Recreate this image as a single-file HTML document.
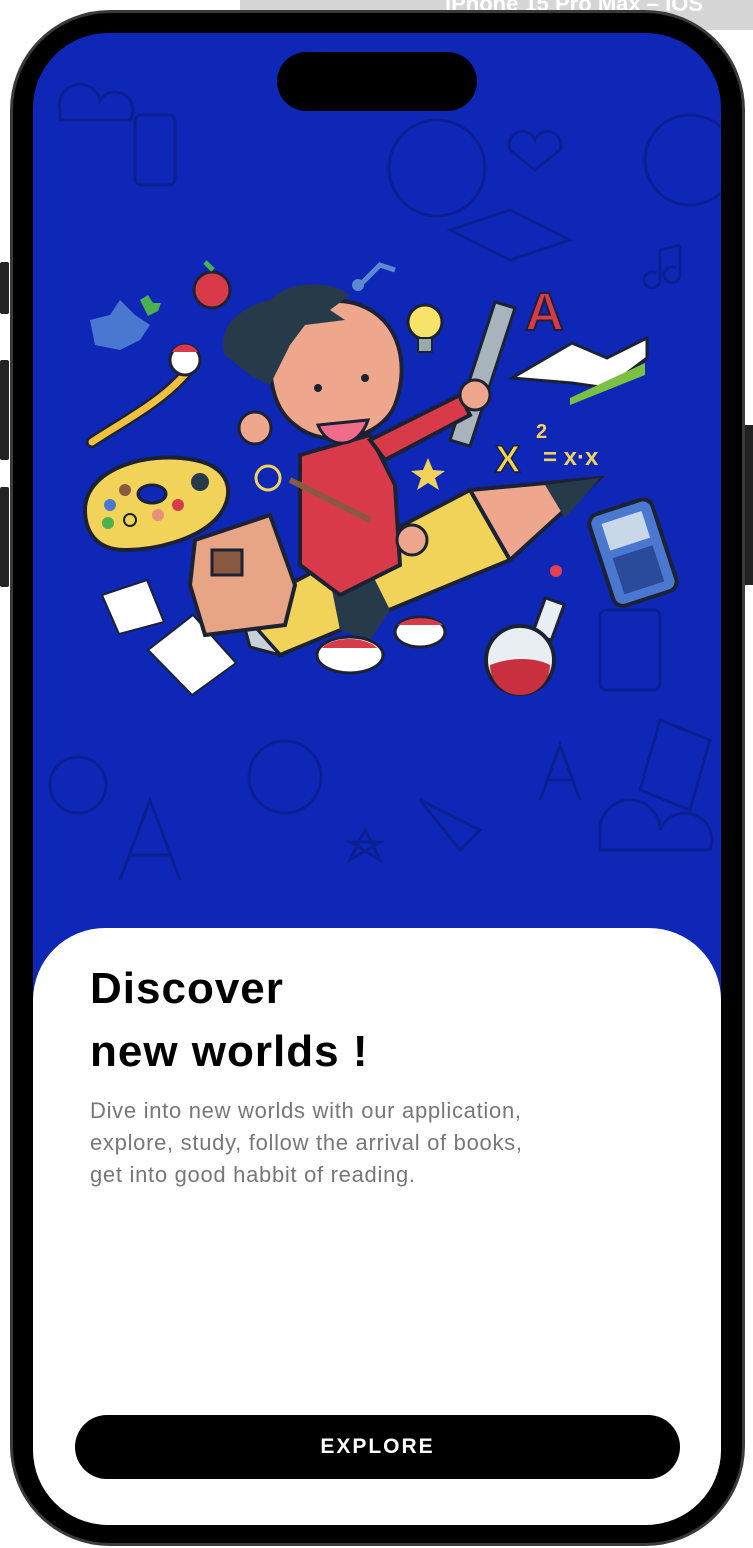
<!DOCTYPE html>
<html><head><meta charset="utf-8"><style>
*{margin:0;padding:0;box-sizing:border-box}
body{width:753px;height:1548px;background:#fff;position:relative;overflow:hidden;font-family:"Liberation Sans",sans-serif}
.bar{position:absolute;left:240px;top:0;width:513px;height:30px;background:#d6d6d6}
.bar span{position:absolute;left:205px;top:-9px;color:#fff;font-weight:bold;font-size:22px}
.btn{position:absolute;left:0;width:9px;background:#222;border-radius:2px}
.rbtn{position:absolute;left:745px;width:8px;background:#222}
.frame{position:absolute;left:10px;top:10px;width:735px;height:1536px;border-radius:100px;background:#000;border:3px solid #3a3a3a}
.screen{position:absolute;left:33px;top:33px;width:688px;height:1492px;border-radius:75px;background:#0e27b6;overflow:hidden}
.island{position:absolute;left:244px;top:19px;width:200px;height:59px;border-radius:30px;background:#000}
.card{position:absolute;left:0;top:895px;width:688px;height:620px;background:#fff;border-radius:72px 72px 0 0}
h1{position:absolute;left:57px;top:29px;font-size:44px;line-height:63px;font-weight:bold;color:#000;letter-spacing:1px}
p{position:absolute;left:57px;top:167px;font-size:22px;line-height:32px;color:#777;letter-spacing:0.7px}
.ex{position:absolute;left:42px;top:487px;width:605px;height:64px;border-radius:32px;background:#000;color:#fff;font-weight:bold;font-size:21px;letter-spacing:2px;text-align:center;line-height:64px}
</style></head><body>
<div class="bar"><span>iPhone 15 Pro Max – iOS</span></div>
<div class="btn" style="top:262px;height:52px"></div>
<div class="btn" style="top:360px;height:100px"></div>
<div class="btn" style="top:487px;height:100px"></div>
<div class="rbtn" style="top:425px;height:160px"></div>
<div class="frame"></div>
<div class="screen">
<svg width="688" height="900" viewBox="33 33 688 900" style="position:absolute;left:0;top:0">
<g fill="none" stroke="#0a1f8a" stroke-width="3" opacity="0.8">
<circle cx="437" cy="168" r="48"/><circle cx="285" cy="777" r="36"/>
<rect x="135" y="115" width="40" height="70" rx="6"/><path d="M510 150 l25 20 l25-20 a12 12 0 0 0-25-10 a12 12 0 0 0-25 10z"/>
<circle cx="690" cy="160" r="45"/><path d="M120 880 l30-80 l30 80 M130 855 h40"/>
<path d="M540 800 l20-55 l20 55 M548 780 h25"/><path d="M660 720 l50 20 l-20 70 l-50-20z"/>
<path d="M600 830 a30 30 0 0 1 60 0 a25 25 0 0 1 50 20 h-110z"/><path d="M350 860 l15-30 l15 30 l-30-18 h30z"/>
<path d="M420 800 l60 30 l-20 20z"/><circle cx="78" cy="785" r="28"/>
<path d="M60 110 a20 20 0 0 1 40-10 a18 18 0 0 1 30 20 h-70z"/><path d="M660 250 v30 a8 8 0 1 1-4-7 M680 245 v30 a8 8 0 1 1-4-7 M660 250 l20-5"/>
<path d="M450 230 l60-20 l60 30 l-60 20z"/><rect x="600" y="610" width="60" height="80" rx="6"/>
</g>
<path d="M85 510 c0-40 60-60 110-50 c40 8 40 40 20 60 c-20 20-60 30-90 30 c-30 0-40-20-40-40z" fill="#f2d35a" stroke="#1b2233" stroke-width="4"/>
<ellipse cx="152" cy="494" rx="14" ry="9" fill="#0e27b6" stroke="#1b2233" stroke-width="3"/>
<circle cx="200" cy="482" r="9" fill="#263a4a"/><circle cx="110" cy="505" r="6" fill="#4a78d0"/><circle cx="108" cy="523" r="6" fill="#4caf50"/><circle cx="130" cy="520" r="6" fill="#f2d35a" stroke="#1b2233" stroke-width="2"/><circle cx="158" cy="515" r="6" fill="#e8907a"/><circle cx="178" cy="505" r="6" fill="#d83a4a"/><circle cx="125" cy="490" r="6" fill="#8a5a40"/>
<path d="M92 442 c30-20 70-40 95-70" stroke="#1b2233" stroke-width="12" stroke-linecap="round" fill="none"/>
<path d="M92 442 c30-20 70-40 95-70" stroke="#f2c040" stroke-width="7" stroke-linecap="round" fill="none"/>
<circle cx="185" cy="360" r="15" fill="#fff" stroke="#1b2233" stroke-width="3"/><path d="M172 352 a15 15 0 0 1 26 0z" fill="#d83a4a"/>
<path d="M90 320 l20-5 l10-15 l15 15 l15 10 l-10 15 l-20 10 l-25-5z" fill="#4a78d0"/>
<path d="M140 300 l8-5 l5 8 l8 0 l-3 8 l-10 5z" fill="#4caf50"/>
<circle cx="212" cy="290" r="18" fill="#d83a4a" stroke="#1b2233" stroke-width="3"/><path d="M205 262 l8 8" stroke="#4caf50" stroke-width="5"/>
<path d="M360 285 l20-20 l15 5" stroke="#5a8ad0" stroke-width="5" fill="none"/><circle cx="358" cy="285" r="6" fill="#5a8ad0"/>
<circle cx="425" cy="322" r="17" fill="#f7e36a" stroke="#1b2233" stroke-width="3"/><rect x="418" y="338" width="14" height="14" fill="#9aa" stroke="#1b2233" stroke-width="2"/>
<path d="M450 440 l45-138 l20 6 l-45 138z" fill="#a8b4bc" stroke="#1b2233" stroke-width="3"/>
<text x="525" y="330" font-family="Liberation Sans" font-weight="bold" font-size="54" fill="#d83a4a" stroke="#1b2233" stroke-width="2">A</text>
<path d="M512 378 l60-35 l35 15 l40-20 v20 l-40 30 l-35-5z" fill="#fff" stroke="#1b2233" stroke-width="3"/><path d="M570 398 l75-35 v12 l-75 30z" fill="#7ac043"/>
<text x="495" y="472" font-family="Liberation Sans" font-weight="bold" font-size="38" fill="#f2d35a" stroke="#1b2233" stroke-width="1.5">X</text>
<text x="536" y="438" font-family="Liberation Sans" font-weight="bold" font-size="20" fill="#f2d35a">2</text>
<text x="543" y="465" font-family="Liberation Sans" font-weight="bold" font-size="24" fill="#f2d35a">= x·x</text>
<path d="M428 458 l5 12 l12 1 l-10 7 l4 12 l-11-7 l-11 7 l4-12 l-10-7 l12-1z" fill="#f2d35a"/>
<circle cx="268" cy="478" r="12" fill="none" stroke="#f2d35a" stroke-width="3"/>
<g transform="rotate(-18 632 553)"><rect x="600" y="505" width="66" height="96" rx="10" fill="#4a78d0" stroke="#1b2233" stroke-width="4"/><rect x="612" y="516" width="42" height="28" fill="#c8d8e8"/><rect x="612" y="552" width="42" height="38" fill="#2a4a9a"/></g>
<rect x="538" y="600" width="20" height="38" fill="#e8eef2" stroke="#1b2233" stroke-width="3" transform="rotate(20 548 620)"/>
<circle cx="520" cy="660" r="34" fill="#e8eef2" stroke="#1b2233" stroke-width="4"/><path d="M490 665 a30 30 0 0 0 60 0 c-15 -8 -40 -8 -60 0z" fill="#c83040"/>
<circle cx="556" cy="571" r="6" fill="#e04050"/>
<path d="M102 595 l45-15 l17 42 l-45 12z" fill="#fff" stroke="#1b2233" stroke-width="2"/>
<path d="M148 650 l45-35 l43 48 l-44 32z" fill="#fff" stroke="#1b2233" stroke-width="2"/>
<path d="M240 610 l230-120 l40 70 l-230 95z" fill="#f2d35a" stroke="#1b2233" stroke-width="4"/>
<path d="M470 490 l130-12 l-90 82z" fill="#eea68c" stroke="#1b2233" stroke-width="4"/>
<path d="M545 485 l55-7 l-35 40z" fill="#263a4a"/>
<path d="M240 610 l40 45 l-30 -8 z" fill="#c8d0d8" stroke="#1b2233" stroke-width="3"/>
<path d="M195 540 l75-25 l25 70 l-10 40 l-80 10 l-15-50z" fill="#e7a585" stroke="#1b2233" stroke-width="4"/>
<rect x="212" y="550" width="30" height="25" fill="#8a5a40" stroke="#1b2233" stroke-width="3"/>
<path d="M330 580 l40-10 l20 40 l-20 30 l-30-10z" fill="#263a4a"/>
<ellipse cx="350" cy="655" rx="33" ry="18" fill="#fff" stroke="#1b2233" stroke-width="3"/><path d="M322 648 a30 15 0 0 1 55 0z" fill="#d83a4a"/>
<ellipse cx="420" cy="632" rx="25" ry="15" fill="#fff" stroke="#1b2233" stroke-width="3"/><path d="M398 625 a25 12 0 0 1 45 0z" fill="#d83a4a"/>
<path d="M300 455 l70-20 l25 50 l5 80 l-60 30 l-40-30z" fill="#d83a4a" stroke="#1b2233" stroke-width="4"/>
<path d="M370 440 l90-45 l10 20 l-85 45z" fill="#d83a4a" stroke="#1b2233" stroke-width="4"/>
<circle cx="475" cy="395" r="15" fill="#eea68c" stroke="#1b2233" stroke-width="3"/>
<circle cx="412" cy="540" r="15" fill="#eea68c" stroke="#1b2233" stroke-width="3"/>
<path d="M290 480 l80 40" stroke="#8a5a40" stroke-width="6"/>
<path d="M270 360 c0-40 50-70 90-55 c40 15 50 60 35 100 c-15 35-70 45-100 20 c-20-15-25-40-25-65z" fill="#eea68c" stroke="#1b2233" stroke-width="4"/>
<path d="M225 355 c-10-30 20-50 45-55 c20-20 60-20 80-5 l-20 15 l15 10 l-40 5 l-15 20 l-20 40 l-20-10z" fill="#263a4a"/>
<circle cx="255" cy="428" r="16" fill="#eea68c" stroke="#1b2233" stroke-width="3"/>
<circle cx="318" cy="388" r="4" fill="#1b2233"/><circle cx="365" cy="378" r="4" fill="#1b2233"/>
<path d="M318 425 c10 25 40 25 50 -5z" fill="#f06c8a" stroke="#1b2233" stroke-width="3"/>
</svg>
<div class="island"></div>
<div class="card">
<h1>Discover<br>new worlds !</h1>
<p>Dive into new worlds with our application,<br>explore, study, follow the arrival of books,<br>get into good habbit of reading.</p>
<div class="ex">EXPLORE</div>
</div>
</div>
</body></html>
